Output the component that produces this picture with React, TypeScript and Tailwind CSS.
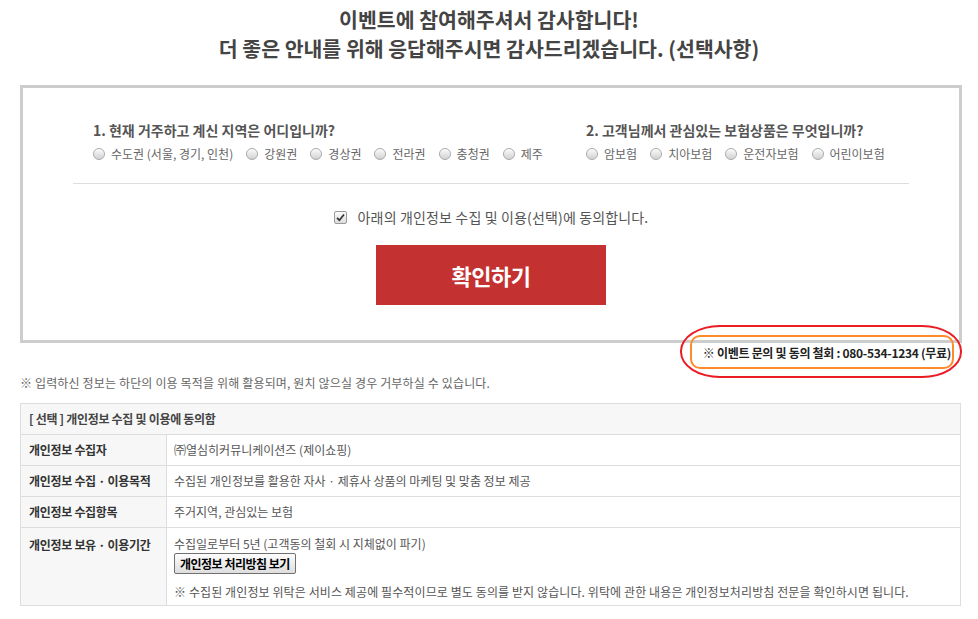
import React from "react";

const font = { fontFamily: '"Noto Sans CJK KR", "Noto Sans", sans-serif' };

const q1 = ["수도권 (서울, 경기, 인천)", "강원권", "경상권", "전라권", "충청권", "제주"];
const q2 = ["암보험", "치아보험", "운전자보험", "어린이보험"];

function Radio({ label }: { label: string }) {
  return (
    <label className="flex items-center gap-[6px] text-[12px] text-[#666] leading-[18px]">
      <span className="w-[12px] h-[12px] rounded-full border border-[#a9a9a9] bg-[linear-gradient(#fafafa,#d2d2d2)] shadow-[inset_0_1px_1px_rgba(255,255,255,0.9)]" />
      {label}
    </label>
  );
}

function Question({ title, items, className }: { title: string; items: string[]; className?: string }) {
  return (
    <div className={"flex flex-col " + (className ?? "")}>
      <div className="text-[14px] font-bold text-[#555] leading-[20px]">{title}</div>
      <div className="mt-[5px] flex gap-[13px]">
        {items.map(i => (
          <Radio key={i} label={i} />
        ))}
      </div>
    </div>
  );
}

const rows = [
  ["개인정보 수집자", "㈜열심히커뮤니케이션즈 (제이쇼핑)"],
  ["개인정보 수집 · 이용목적", "수집된 개인정보를 활용한 자사 · 제휴사 상품의 마케팅 및 맞춤 정보 제공"],
  ["개인정보 수집항목", "주거지역, 관심있는 보험"],
];

function App() {
  return (
    <div className="bg-white min-h-[619px] relative" style={font}>
      <div className="pt-[5px] text-center text-[20.5px] font-bold leading-[29px] text-[#444]">
        <div>이벤트에 참여해주셔서 감사합니다!</div>
        <div>더 좋은 안내를 위해 응답해주시면 감사드리겠습니다. (선택사항)</div>
      </div>

      <div className="ml-[20px] w-[942px] mt-[22px]">
        <div className="border-[3px] border-[#cdcdcd] pt-[32px] pb-[35px]">
          <div className="flex pl-[70px]">
            <Question className="w-[493px]" title="1. 현재 거주하고 계신 지역은 어디입니까?" items={q1} />
            <Question title="2. 고객님께서 관심있는 보험상품은 무엇입니까?" items={q2} />
          </div>
          <div className="mx-[50px] mt-[20px] border-t border-[#dddddd]" />
          <div className="mt-[23px] flex items-center justify-center gap-[11px] text-[14px] text-[#555] leading-[20px]">
            <span className="w-[13px] h-[13px] rounded-[2px] border border-[#9a9a9a] bg-[linear-gradient(#fbfbfb,#dcdcdc)] flex items-center justify-center">
              <svg width="9" height="9" viewBox="0 0 9 9">
                <path d="M1 4.8 L3.4 7.2 L8 1.5" stroke="#333" strokeWidth="1.7" fill="none" />
              </svg>
            </span>
            <span className="tracking-[0.15px]">아래의 개인정보 수집 및 이용(선택)에 동의합니다.</span>
          </div>
          <div className="mt-[18px] flex justify-center">
            <button className="w-[230px] h-[60px] bg-[#c33131] text-white text-[22px] font-bold tracking-[-0.5px]">
              확인하기
            </button>
          </div>
        </div>

        <div className="mt-[2px] pr-[11px] text-right text-[12px] font-bold text-[#222] leading-[16px] tracking-[-0.3px]">
          ※ 이벤트 문의 및 동의 철회 : 080-534-1234 (무료)
        </div>

        <div className="mt-[14px] text-[12px] text-[#666] leading-[16px] tracking-[0.15px]">
          ※ 입력하신 정보는 하단의 이용 목적을 위해 활용되며, 원치 않으실 경우 거부하실 수 있습니다.
        </div>

        <table className="mt-[12px] w-[941px] border-collapse text-[12px]">
          <tbody>
            <tr className="h-[31px] bg-[#f7f7f7]">
              <td colSpan={2} className="border border-[#dddddd] px-[8px] font-bold text-[#444] tracking-[-0.3px]">
                [ 선택 ] 개인정보 수집 및 이용에 동의함
              </td>
            </tr>
            {rows.map(r => (
              <tr key={r[0]} className="h-[31px]">
                <td className="w-[146px] border border-[#dddddd] bg-[#f7f7f7] px-[8px] font-bold text-[#333] tracking-[-0.3px]">{r[0]}</td>
                <td className="border border-[#dddddd] px-[7px] text-[#555]">{r[1]}</td>
              </tr>
            ))}
            <tr className="h-[78px]">
              <td className="align-top border border-[#dddddd] bg-[#f7f7f7] px-[8px] pt-[8px] font-bold text-[#333] tracking-[-0.3px]">
                개인정보 보유 · 이용기간
              </td>
              <td className="align-top border border-[#dddddd] px-[7px] pt-[8px] text-[#555] leading-[16px]">
                <div>수집일로부터 5년 (고객동의 철회 시 지체없이 파기)</div>
                <button className="mt-[1px] h-[21px] px-[5px] border border-[#707070] rounded-[2px] bg-[linear-gradient(#fdfdfd,#dedede)] text-[12px] font-bold text-black tracking-[-0.5px]">
                  개인정보 처리방침 보기
                </button>
                <div className="mt-[10px] pb-[4px] tracking-[0.1px]">
                  ※ 수집된 개인정보 위탁은 서비스 제공에 필수적이므로 별도 동의를 받지 않습니다. 위탁에 관한 내용은 개인정보처리방침 전문을 확인하시면 됩니다.
                </div>
              </td>
            </tr>
          </tbody>
        </table>
      </div>

      {/* annotation overlay */}
      <div className="absolute left-[680px] top-[325px] w-[282px] h-[53px] border-[2.5px] border-[#ea1c24] rounded-[40px/26px]" />
      <div className="absolute left-[690px] top-[335px] w-[264px] h-[34px] border-[2px] border-[#ff8a2a] rounded-[10px]" />
    </div>
  );
}

export default App;
